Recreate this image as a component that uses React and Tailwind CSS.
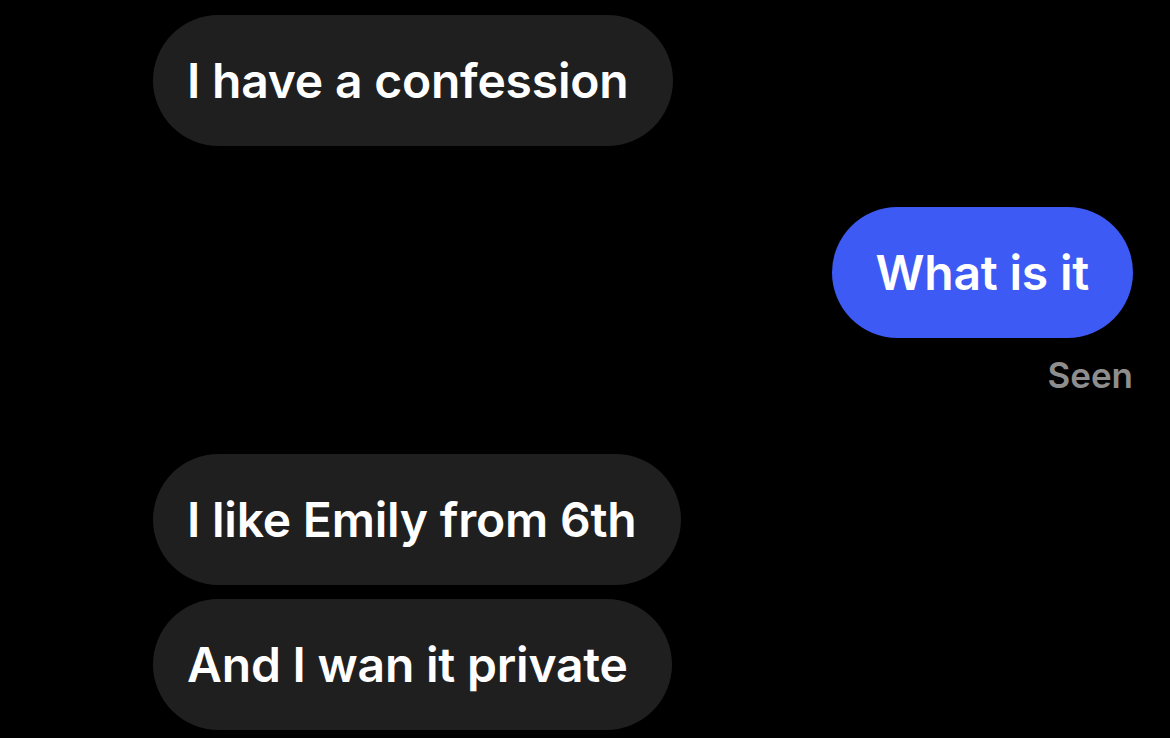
const Bubble = ({ children, mine = false }) => (
  <div
    className={`h-[131px] rounded-full flex items-center whitespace-nowrap text-white font-semibold text-[48px] tracking-[-0.2px] ${
      mine ? "bg-[#3d5af5] px-[44px]" : "bg-[#1f1f1f] pl-[34px] pr-[44px]"
    }`}
  >
    {children}
  </div>
);

export default function App() {
  return (
    <div
      className="w-[1170px] h-[738px] bg-black overflow-hidden flex flex-col"
      style={{ fontFamily: "Inter, 'Noto Sans', sans-serif" }}
    >
      <div className="pl-[153px] pt-[15px] flex">
        <Bubble>I have a confession</Bubble>
      </div>

      <div className="pr-[37px] mt-[61px] flex flex-col items-end">
        <Bubble mine>What is it</Bubble>
        <span className="mt-[20px] text-[35px] font-semibold text-[#8e8e8e] leading-none">
          Seen
        </span>
      </div>

      <div className="pl-[153px] mt-[61px] flex flex-col items-start gap-[14px]">
        <Bubble>I like Emily from 6th</Bubble>
        <Bubble>And I wan it private</Bubble>
      </div>
    </div>
  );
}
